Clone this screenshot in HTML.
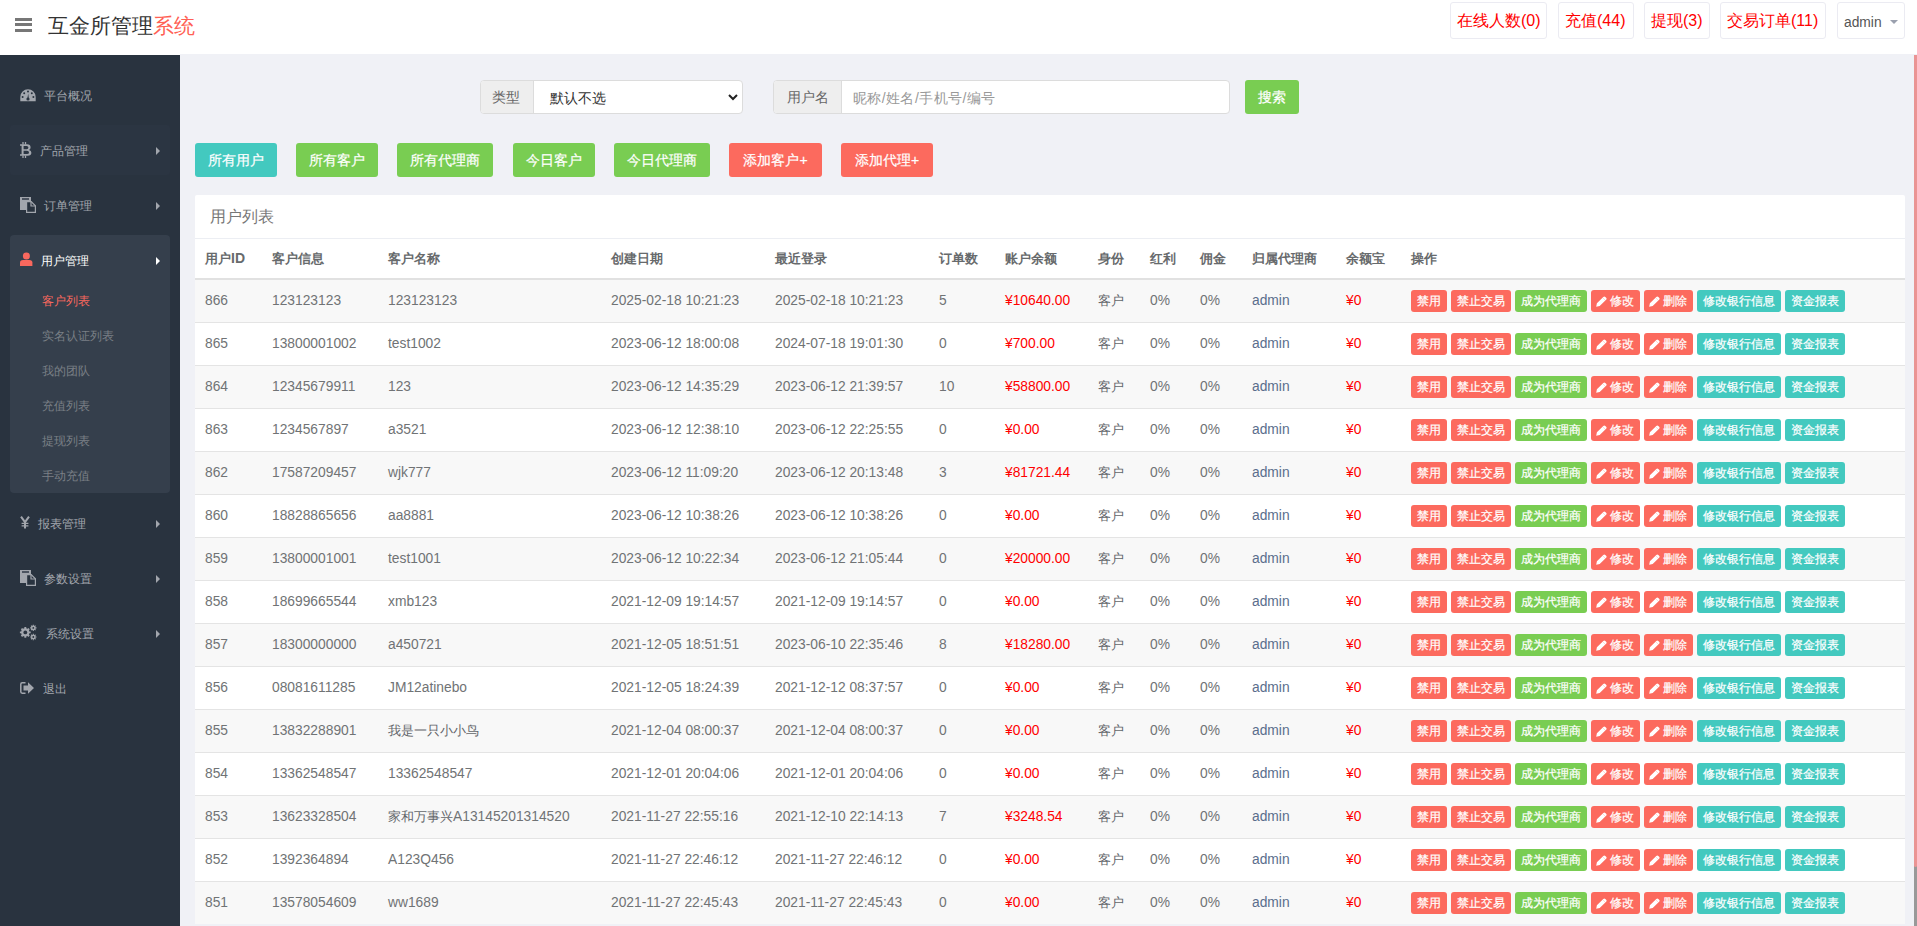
<!DOCTYPE html>
<html><head><meta charset="utf-8">
<style>
*{box-sizing:border-box;margin:0;padding:0}
html,body{width:1917px;height:926px;overflow:hidden;background:#f0f1f6;font-family:"Liberation Sans",sans-serif;color:#676a6c}
#hdr{position:absolute;left:0;top:0;width:1917px;height:55px;background:#fff}
.hb{position:absolute;left:15px;width:17px;height:3px;background:#777}
#title{position:absolute;left:48px;top:12px;font-size:21px;color:#333;line-height:28px;white-space:nowrap}
#title span{color:#ff5f55}
.tb{position:absolute;top:2px;height:37px;border:1px solid #ebebf2;border-radius:3px;color:#f00;font-size:16px;line-height:35px;padding:0 6px;white-space:nowrap;background:#fff}
#side{position:absolute;left:0;top:55px;width:180px;height:871px;background:#29333f}
.mi{position:absolute;margin-top:1px;left:0;width:180px;height:20px;line-height:20px;font-size:12px;color:#a2a6ad;white-space:nowrap}
.mi .ic{position:absolute;left:20px;top:3px}
.mi .tx{position:absolute;left:44px;top:0}
.mi .ar{position:absolute;left:156px;top:6px;width:0;height:0;border-left:4px solid #a2a6ad;border-top:4px solid transparent;border-bottom:4px solid transparent}
#active{position:absolute;left:10px;top:180px;width:160px;height:258px;background:#353f4c;border-radius:4px}
.sub{position:absolute;margin-top:1px;left:42px;font-size:12px;color:#7a7f86;line-height:20px;white-space:nowrap}
#content{position:absolute;left:180px;top:54px;width:1737px;height:872px;background:#f0f1f6}
.ig{position:absolute;top:80px;height:34px;border:1px solid #dcdcdc;border-radius:4px;background:#fff;font-size:14px}
.ig .ad{position:absolute;left:0;top:0;height:32px;background:#eeeeee;border-right:1px solid #dcdcdc;border-radius:3px 0 0 3px;color:#666;line-height:32px;text-align:center}
.btn{position:absolute;height:34px;border-radius:3px;color:#fff;font-size:14px;line-height:34px;text-align:center;white-space:nowrap}
.teal{background:#43c9bf}.green{background:#79cd52}.redb{background:#fc6a5e}
#panel{position:absolute;left:195px;top:195px;width:1710px;height:729px;background:#fff;overflow:hidden;border-radius:2px 2px 0 0}
#ptitle{position:absolute;left:15px;top:12px;font-size:16px;color:#777;line-height:20px}
#ptl{position:absolute;left:0;top:43px;width:1710px;height:1px;background:#eceef3}
table{position:absolute;left:0;top:44px;border-collapse:collapse;table-layout:fixed;width:1710px;font-size:13.8px}
th{height:40px;text-align:left;font-weight:bold;padding:0 0 0 10px;border-bottom:2px solid #e1e1e1;color:#676a6c;white-space:nowrap;font-size:14px}
td{height:43px;font-size:13.8px;padding:0 0 0 10px;border-bottom:1px solid #e4e4e4;white-space:nowrap;color:#707375}
tbody tr:nth-child(odd) td{background:#f8f8f8}
td i,th i{font-style:normal;font-size:13px}
td i{color:#63666a}
td.red{color:#f00}
td.ad{color:#5a6e8c}
td.op{padding-left:10px;padding-bottom:0;padding-top:0}
.b{display:inline-block;height:22px;line-height:22px;font-size:12px;color:#fff;padding:0 6px;border-radius:3px;margin-right:4px;vertical-align:middle}
.b,.btn{-webkit-text-stroke:0.2px #fff}
.b.r{background:#fc6a5e}.b.g{background:#79cd52}.b.t{background:#43c9bf}
.pc{vertical-align:-2px;margin-left:-1px;margin-right:3px}
#sb{position:absolute;left:1914px;top:55px;width:3px;height:812px;background:#ea9494;border-radius:0 0 2px 2px;z-index:2}
#sb2{position:absolute;left:1914px;top:864px;width:3px;height:62px;background:#999}
</style></head><body>
<div id="hdr">
  <div class="hb" style="top:18px"></div><div class="hb" style="top:23px"></div><div class="hb" style="top:29px"></div>
  <div id="title">互金所管理<span>系统</span></div>
  <div class="tb" style="left:1450px;width:97px">在线人数(0)</div>
  <div class="tb" style="left:1558px;width:76px">充值(44)</div>
  <div class="tb" style="left:1644px;width:66px">提现(3)</div>
  <div class="tb" style="left:1720px;width:106px">交易订单(11)</div>
  <div class="tb" style="left:1837px;width:68px;color:#555;font-size:13.8px;line-height:39px">admin <svg width="8" height="5" style="position:absolute;left:52px;top:17px"><path d="M0 0H8L4 4Z" fill="#9aa0ae"/></svg></div>
</div>
<div id="side">
  <div id="active"></div><div style="position:absolute;left:10px;top:70px;width:160px;height:50px;background:#2b3542;border-radius:3px"></div>
  <div class="mi" style="top:30px"><svg class="ic" width="16" height="13" viewBox="0 0 16 13" style="left:20px;top:3px"><path d="M8 0.3A7.7 7.7 0 0 0 0.3 8V12.2H15.7V8A7.7 7.7 0 0 0 8 0.3Z" fill="#a2a6ad"/><circle cx="8" cy="2.6" r="1" fill="#29333f"/><circle cx="4.2" cy="4.2" r="1" fill="#29333f"/><circle cx="11.8" cy="4.2" r="1" fill="#29333f"/><circle cx="2.6" cy="8" r="1" fill="#29333f"/><circle cx="13.4" cy="8" r="1" fill="#29333f"/><circle cx="8" cy="10" r="1.6" fill="#29333f"/><path d="M7.3 10L8.2 4.5L8.9 10Z" fill="#29333f"/></svg><span class="tx">平台概况</span></div>
  <div class="mi" style="top:85px"><svg class="ic" width="12" height="16" viewBox="0 0 12 16" style="left:20px;top:1px"><path d="M3 0V2.5M5.5 0V2.5M3 13.5V16M5.5 13.5V16" stroke="#a2a6ad" stroke-width="1.3"/><path d="M0 2.3H7Q10.6 2.3 10.6 5.5Q10.6 7.3 9 7.9Q11.4 8.6 11.4 10.8Q11.4 13.7 7.6 13.7H0V12.3H1.6V3.7H0Z M3.6 3.9V7.2H6.7Q8.4 7.2 8.4 5.5Q8.4 3.9 6.7 3.9Z M3.6 8.8V12.1H7Q9 12.1 9 10.5Q9 8.8 7 8.8Z" fill="#a2a6ad" fill-rule="evenodd"/></svg><span class="tx" style="left:40px">产品管理</span><span class="ar"></span></div>
  <div class="mi" style="top:140px"><svg class="ic" width="16" height="16" viewBox="0 0 16 16" style="left:20px;top:1px"><path d="M0 0H11V4H6V13H0Z" fill="#a2a6ad"/><rect x="2" y="1.3" width="7" height="1.4" fill="#29333f"/><path d="M6.6 4.6H11.2L15.4 8.8V15.4H6.6Z" fill="none" stroke="#a2a6ad" stroke-width="1.2"/><path d="M11 4.6V9H15.4" fill="none" stroke="#a2a6ad" stroke-width="1.2"/></svg><span class="tx">订单管理</span><span class="ar"></span></div>
  <div class="mi" style="top:195px;color:#fff"><svg class="ic" width="14" height="15" viewBox="0 0 14 15" style="left:20px;top:1px"><circle cx="6.4" cy="4.1" r="3.5" fill="#f9685e"/><path d="M0 14.1V10.6Q0 7.9 3 7.9H9.4Q12.4 7.9 12.4 10.6V14.1Z" fill="#f9685e"/></svg><span class="tx" style="left:41px">用户管理</span><span class="ar" style="border-left-color:#fff"></span></div>
  <div class="sub" style="top:235px;color:#f9685e">客户列表</div>
  <div class="sub" style="top:270px">实名认证列表</div>
  <div class="sub" style="top:305px">我的团队</div>
  <div class="sub" style="top:340px">充值列表</div>
  <div class="sub" style="top:375px">提现列表</div>
  <div class="sub" style="top:410px">手动充值</div>
  <div class="mi" style="top:458px"><svg class="ic" width="11" height="13" viewBox="0 0 11 13" style="left:20px;top:2px"><path d="M1 0.6L5 6.2M9 0.6L5 6.2M5 5.8V12.6" stroke="#a2a6ad" stroke-width="2" fill="none"/><path d="M1.6 7.4H8.4M1.6 9.8H8.4" stroke="#a2a6ad" stroke-width="1.3" fill="none"/></svg><span class="tx" style="left:38px">报表管理</span><span class="ar"></span></div>
  <div class="mi" style="top:513px"><svg class="ic" width="16" height="16" viewBox="0 0 16 16" style="left:20px;top:1px"><path d="M0 0H11V4H6V13H0Z" fill="#a2a6ad"/><rect x="2" y="1.3" width="7" height="1.4" fill="#29333f"/><path d="M6.6 4.6H11.2L15.4 8.8V15.4H6.6Z" fill="none" stroke="#a2a6ad" stroke-width="1.2"/><path d="M11 4.6V9H15.4" fill="none" stroke="#a2a6ad" stroke-width="1.2"/></svg><span class="tx">参数设置</span><span class="ar"></span></div>
  <div class="mi" style="top:568px"><svg class="ic" width="18" height="18" viewBox="0 0 18 18" style="left:19px;top:0px"><circle cx="6.3" cy="8.4" r="4.1" fill="#a2a6ad"/><path d="M11.70 8.40L0.90 8.40M10.12 12.22L2.48 4.58M6.30 13.80L6.30 3.00M2.48 12.22L10.12 4.58" stroke="#a2a6ad" stroke-width="1.9"/><circle cx="6.3" cy="8.4" r="1.9" fill="#29333f"/><circle cx="14.3" cy="3.9" r="2.3" fill="#a2a6ad"/><path d="M17.50 3.90L11.10 3.90M16.56 6.16L12.04 1.64M14.30 7.10L14.30 0.70M12.04 6.16L16.56 1.64" stroke="#a2a6ad" stroke-width="1.1"/><circle cx="14.3" cy="3.9" r="0.9" fill="#29333f"/><circle cx="14.3" cy="13.0" r="2.3" fill="#a2a6ad"/><path d="M17.50 13.00L11.10 13.00M16.56 15.26L12.04 10.74M14.30 16.20L14.30 9.80M12.04 15.26L16.56 10.74" stroke="#a2a6ad" stroke-width="1.1"/><circle cx="14.3" cy="13.0" r="0.9" fill="#29333f"/></svg><span class="tx" style="left:46px">系统设置</span><span class="ar"></span></div>
  <div class="mi" style="top:623px"><svg class="ic" width="15" height="12" viewBox="0 0 15 12" style="left:20px;top:3px"><path d="M5.5 0.8H2.2Q0.8 0.8 0.8 2.2V9.8Q0.8 11.2 2.2 11.2H5.5" stroke="#a2a6ad" stroke-width="1.5" fill="none"/><path d="M3.5 3.6H8V0.3L14 6L8 11.7V8.4H3.5Z" fill="#a2a6ad"/></svg><span class="tx" style="left:43px">退出</span></div>
</div>
<div id="content"></div>
<div class="ig" style="left:480px;width:263px"><div class="ad" style="width:53px;padding-right:2px">类型</div><span style="position:absolute;left:69px;top:9px;color:#333">默认不选</span><svg width="10" height="7" viewBox="0 0 10 7" style="position:absolute;left:247px;top:13px"><path d="M1 1L5 5L9 1" stroke="#222" stroke-width="2" fill="none"/></svg></div>
<div class="ig" style="left:773px;width:457px"><div class="ad" style="width:68px">用户名</div><span style="position:absolute;left:79px;top:9px;color:#999;letter-spacing:0.4px">昵称/姓名/手机号/编号</span></div>
<div class="btn green" style="left:1245px;top:80px;width:54px">搜索</div>
<div class="btn teal" style="left:195px;top:143px;width:82px">所有用户</div>
<div class="btn green" style="left:296px;top:143px;width:82px">所有客户</div>
<div class="btn green" style="left:397px;top:143px;width:96px">所有代理商</div>
<div class="btn green" style="left:513px;top:143px;width:82px">今日客户</div>
<div class="btn green" style="left:614px;top:143px;width:96px">今日代理商</div>
<div class="btn redb" style="left:729px;top:143px;width:93px">添加客户+</div>
<div class="btn redb" style="left:841px;top:143px;width:92px">添加代理+</div>
<div id="panel">
  <div id="ptitle">用户列表</div>
  <div id="ptl"></div>
  <table>
    <colgroup><col style="width:67px"><col style="width:116px"><col style="width:223px"><col style="width:164px"><col style="width:164px"><col style="width:66px"><col style="width:93px"><col style="width:52px"><col style="width:50px"><col style="width:52px"><col style="width:94px"><col style="width:65px"><col></colgroup>
    <thead><tr><th><i>用户</i>ID</th><th><i>客户信息</i></th><th><i>客户名称</i></th><th><i>创建日期</i></th><th><i>最近登录</i></th><th><i>订单数</i></th><th><i>账户余额</i></th><th><i>身份</i></th><th><i>红利</i></th><th><i>佣金</i></th><th><i>归属代理商</i></th><th><i>余额宝</i></th><th><i>操作</i></th></tr></thead>
    <tbody>
<tr><td>866</td><td>123123123</td><td>123123123</td><td>2025-02-18 10:21:23</td><td>2025-02-18 10:21:23</td><td>5</td><td class="red">¥10640.00</td><td><i>客户</i></td><td>0%</td><td>0%</td><td class="ad">admin</td><td class="red">¥0</td><td class="op"><span class="b r">禁用</span><span class="b r">禁止交易</span><span class="b g">成为代理商</span><span class="b r"><svg class="pc" width="11" height="11" viewBox="0 0 11 11"><path d="M0.2 10.8L0.9 7.3L7.3 0.9Q8.3 -0.1 9.3 0.9L10.1 1.7Q11.1 2.7 10.1 3.7L3.7 10.1Z" fill="#fff"/><path d="M6.9 1.9L9.1 4.1" stroke="#f96b61" stroke-width="0.5" opacity="0.5"/></svg>修改</span><span class="b r"><svg class="pc" width="11" height="11" viewBox="0 0 11 11"><path d="M0.2 10.8L0.9 7.3L7.3 0.9Q8.3 -0.1 9.3 0.9L10.1 1.7Q11.1 2.7 10.1 3.7L3.7 10.1Z" fill="#fff"/><path d="M6.9 1.9L9.1 4.1" stroke="#f96b61" stroke-width="0.5" opacity="0.5"/></svg>删除</span><span class="b t">修改银行信息</span><span class="b t">资金报表</span></td></tr>
<tr><td>865</td><td>13800001002</td><td>test1002</td><td>2023-06-12 18:00:08</td><td>2024-07-18 19:01:30</td><td>0</td><td class="red">¥700.00</td><td><i>客户</i></td><td>0%</td><td>0%</td><td class="ad">admin</td><td class="red">¥0</td><td class="op"><span class="b r">禁用</span><span class="b r">禁止交易</span><span class="b g">成为代理商</span><span class="b r"><svg class="pc" width="11" height="11" viewBox="0 0 11 11"><path d="M0.2 10.8L0.9 7.3L7.3 0.9Q8.3 -0.1 9.3 0.9L10.1 1.7Q11.1 2.7 10.1 3.7L3.7 10.1Z" fill="#fff"/><path d="M6.9 1.9L9.1 4.1" stroke="#f96b61" stroke-width="0.5" opacity="0.5"/></svg>修改</span><span class="b r"><svg class="pc" width="11" height="11" viewBox="0 0 11 11"><path d="M0.2 10.8L0.9 7.3L7.3 0.9Q8.3 -0.1 9.3 0.9L10.1 1.7Q11.1 2.7 10.1 3.7L3.7 10.1Z" fill="#fff"/><path d="M6.9 1.9L9.1 4.1" stroke="#f96b61" stroke-width="0.5" opacity="0.5"/></svg>删除</span><span class="b t">修改银行信息</span><span class="b t">资金报表</span></td></tr>
<tr><td>864</td><td>12345679911</td><td>123</td><td>2023-06-12 14:35:29</td><td>2023-06-12 21:39:57</td><td>10</td><td class="red">¥58800.00</td><td><i>客户</i></td><td>0%</td><td>0%</td><td class="ad">admin</td><td class="red">¥0</td><td class="op"><span class="b r">禁用</span><span class="b r">禁止交易</span><span class="b g">成为代理商</span><span class="b r"><svg class="pc" width="11" height="11" viewBox="0 0 11 11"><path d="M0.2 10.8L0.9 7.3L7.3 0.9Q8.3 -0.1 9.3 0.9L10.1 1.7Q11.1 2.7 10.1 3.7L3.7 10.1Z" fill="#fff"/><path d="M6.9 1.9L9.1 4.1" stroke="#f96b61" stroke-width="0.5" opacity="0.5"/></svg>修改</span><span class="b r"><svg class="pc" width="11" height="11" viewBox="0 0 11 11"><path d="M0.2 10.8L0.9 7.3L7.3 0.9Q8.3 -0.1 9.3 0.9L10.1 1.7Q11.1 2.7 10.1 3.7L3.7 10.1Z" fill="#fff"/><path d="M6.9 1.9L9.1 4.1" stroke="#f96b61" stroke-width="0.5" opacity="0.5"/></svg>删除</span><span class="b t">修改银行信息</span><span class="b t">资金报表</span></td></tr>
<tr><td>863</td><td>1234567897</td><td>a3521</td><td>2023-06-12 12:38:10</td><td>2023-06-12 22:25:55</td><td>0</td><td class="red">¥0.00</td><td><i>客户</i></td><td>0%</td><td>0%</td><td class="ad">admin</td><td class="red">¥0</td><td class="op"><span class="b r">禁用</span><span class="b r">禁止交易</span><span class="b g">成为代理商</span><span class="b r"><svg class="pc" width="11" height="11" viewBox="0 0 11 11"><path d="M0.2 10.8L0.9 7.3L7.3 0.9Q8.3 -0.1 9.3 0.9L10.1 1.7Q11.1 2.7 10.1 3.7L3.7 10.1Z" fill="#fff"/><path d="M6.9 1.9L9.1 4.1" stroke="#f96b61" stroke-width="0.5" opacity="0.5"/></svg>修改</span><span class="b r"><svg class="pc" width="11" height="11" viewBox="0 0 11 11"><path d="M0.2 10.8L0.9 7.3L7.3 0.9Q8.3 -0.1 9.3 0.9L10.1 1.7Q11.1 2.7 10.1 3.7L3.7 10.1Z" fill="#fff"/><path d="M6.9 1.9L9.1 4.1" stroke="#f96b61" stroke-width="0.5" opacity="0.5"/></svg>删除</span><span class="b t">修改银行信息</span><span class="b t">资金报表</span></td></tr>
<tr><td>862</td><td>17587209457</td><td>wjk777</td><td>2023-06-12 11:09:20</td><td>2023-06-12 20:13:48</td><td>3</td><td class="red">¥81721.44</td><td><i>客户</i></td><td>0%</td><td>0%</td><td class="ad">admin</td><td class="red">¥0</td><td class="op"><span class="b r">禁用</span><span class="b r">禁止交易</span><span class="b g">成为代理商</span><span class="b r"><svg class="pc" width="11" height="11" viewBox="0 0 11 11"><path d="M0.2 10.8L0.9 7.3L7.3 0.9Q8.3 -0.1 9.3 0.9L10.1 1.7Q11.1 2.7 10.1 3.7L3.7 10.1Z" fill="#fff"/><path d="M6.9 1.9L9.1 4.1" stroke="#f96b61" stroke-width="0.5" opacity="0.5"/></svg>修改</span><span class="b r"><svg class="pc" width="11" height="11" viewBox="0 0 11 11"><path d="M0.2 10.8L0.9 7.3L7.3 0.9Q8.3 -0.1 9.3 0.9L10.1 1.7Q11.1 2.7 10.1 3.7L3.7 10.1Z" fill="#fff"/><path d="M6.9 1.9L9.1 4.1" stroke="#f96b61" stroke-width="0.5" opacity="0.5"/></svg>删除</span><span class="b t">修改银行信息</span><span class="b t">资金报表</span></td></tr>
<tr><td>860</td><td>18828865656</td><td>aa8881</td><td>2023-06-12 10:38:26</td><td>2023-06-12 10:38:26</td><td>0</td><td class="red">¥0.00</td><td><i>客户</i></td><td>0%</td><td>0%</td><td class="ad">admin</td><td class="red">¥0</td><td class="op"><span class="b r">禁用</span><span class="b r">禁止交易</span><span class="b g">成为代理商</span><span class="b r"><svg class="pc" width="11" height="11" viewBox="0 0 11 11"><path d="M0.2 10.8L0.9 7.3L7.3 0.9Q8.3 -0.1 9.3 0.9L10.1 1.7Q11.1 2.7 10.1 3.7L3.7 10.1Z" fill="#fff"/><path d="M6.9 1.9L9.1 4.1" stroke="#f96b61" stroke-width="0.5" opacity="0.5"/></svg>修改</span><span class="b r"><svg class="pc" width="11" height="11" viewBox="0 0 11 11"><path d="M0.2 10.8L0.9 7.3L7.3 0.9Q8.3 -0.1 9.3 0.9L10.1 1.7Q11.1 2.7 10.1 3.7L3.7 10.1Z" fill="#fff"/><path d="M6.9 1.9L9.1 4.1" stroke="#f96b61" stroke-width="0.5" opacity="0.5"/></svg>删除</span><span class="b t">修改银行信息</span><span class="b t">资金报表</span></td></tr>
<tr><td>859</td><td>13800001001</td><td>test1001</td><td>2023-06-12 10:22:34</td><td>2023-06-12 21:05:44</td><td>0</td><td class="red">¥20000.00</td><td><i>客户</i></td><td>0%</td><td>0%</td><td class="ad">admin</td><td class="red">¥0</td><td class="op"><span class="b r">禁用</span><span class="b r">禁止交易</span><span class="b g">成为代理商</span><span class="b r"><svg class="pc" width="11" height="11" viewBox="0 0 11 11"><path d="M0.2 10.8L0.9 7.3L7.3 0.9Q8.3 -0.1 9.3 0.9L10.1 1.7Q11.1 2.7 10.1 3.7L3.7 10.1Z" fill="#fff"/><path d="M6.9 1.9L9.1 4.1" stroke="#f96b61" stroke-width="0.5" opacity="0.5"/></svg>修改</span><span class="b r"><svg class="pc" width="11" height="11" viewBox="0 0 11 11"><path d="M0.2 10.8L0.9 7.3L7.3 0.9Q8.3 -0.1 9.3 0.9L10.1 1.7Q11.1 2.7 10.1 3.7L3.7 10.1Z" fill="#fff"/><path d="M6.9 1.9L9.1 4.1" stroke="#f96b61" stroke-width="0.5" opacity="0.5"/></svg>删除</span><span class="b t">修改银行信息</span><span class="b t">资金报表</span></td></tr>
<tr><td>858</td><td>18699665544</td><td>xmb123</td><td>2021-12-09 19:14:57</td><td>2021-12-09 19:14:57</td><td>0</td><td class="red">¥0.00</td><td><i>客户</i></td><td>0%</td><td>0%</td><td class="ad">admin</td><td class="red">¥0</td><td class="op"><span class="b r">禁用</span><span class="b r">禁止交易</span><span class="b g">成为代理商</span><span class="b r"><svg class="pc" width="11" height="11" viewBox="0 0 11 11"><path d="M0.2 10.8L0.9 7.3L7.3 0.9Q8.3 -0.1 9.3 0.9L10.1 1.7Q11.1 2.7 10.1 3.7L3.7 10.1Z" fill="#fff"/><path d="M6.9 1.9L9.1 4.1" stroke="#f96b61" stroke-width="0.5" opacity="0.5"/></svg>修改</span><span class="b r"><svg class="pc" width="11" height="11" viewBox="0 0 11 11"><path d="M0.2 10.8L0.9 7.3L7.3 0.9Q8.3 -0.1 9.3 0.9L10.1 1.7Q11.1 2.7 10.1 3.7L3.7 10.1Z" fill="#fff"/><path d="M6.9 1.9L9.1 4.1" stroke="#f96b61" stroke-width="0.5" opacity="0.5"/></svg>删除</span><span class="b t">修改银行信息</span><span class="b t">资金报表</span></td></tr>
<tr><td>857</td><td>18300000000</td><td>a450721</td><td>2021-12-05 18:51:51</td><td>2023-06-10 22:35:46</td><td>8</td><td class="red">¥18280.00</td><td><i>客户</i></td><td>0%</td><td>0%</td><td class="ad">admin</td><td class="red">¥0</td><td class="op"><span class="b r">禁用</span><span class="b r">禁止交易</span><span class="b g">成为代理商</span><span class="b r"><svg class="pc" width="11" height="11" viewBox="0 0 11 11"><path d="M0.2 10.8L0.9 7.3L7.3 0.9Q8.3 -0.1 9.3 0.9L10.1 1.7Q11.1 2.7 10.1 3.7L3.7 10.1Z" fill="#fff"/><path d="M6.9 1.9L9.1 4.1" stroke="#f96b61" stroke-width="0.5" opacity="0.5"/></svg>修改</span><span class="b r"><svg class="pc" width="11" height="11" viewBox="0 0 11 11"><path d="M0.2 10.8L0.9 7.3L7.3 0.9Q8.3 -0.1 9.3 0.9L10.1 1.7Q11.1 2.7 10.1 3.7L3.7 10.1Z" fill="#fff"/><path d="M6.9 1.9L9.1 4.1" stroke="#f96b61" stroke-width="0.5" opacity="0.5"/></svg>删除</span><span class="b t">修改银行信息</span><span class="b t">资金报表</span></td></tr>
<tr><td>856</td><td>08081611285</td><td>JM12atinebo</td><td>2021-12-05 18:24:39</td><td>2021-12-12 08:37:57</td><td>0</td><td class="red">¥0.00</td><td><i>客户</i></td><td>0%</td><td>0%</td><td class="ad">admin</td><td class="red">¥0</td><td class="op"><span class="b r">禁用</span><span class="b r">禁止交易</span><span class="b g">成为代理商</span><span class="b r"><svg class="pc" width="11" height="11" viewBox="0 0 11 11"><path d="M0.2 10.8L0.9 7.3L7.3 0.9Q8.3 -0.1 9.3 0.9L10.1 1.7Q11.1 2.7 10.1 3.7L3.7 10.1Z" fill="#fff"/><path d="M6.9 1.9L9.1 4.1" stroke="#f96b61" stroke-width="0.5" opacity="0.5"/></svg>修改</span><span class="b r"><svg class="pc" width="11" height="11" viewBox="0 0 11 11"><path d="M0.2 10.8L0.9 7.3L7.3 0.9Q8.3 -0.1 9.3 0.9L10.1 1.7Q11.1 2.7 10.1 3.7L3.7 10.1Z" fill="#fff"/><path d="M6.9 1.9L9.1 4.1" stroke="#f96b61" stroke-width="0.5" opacity="0.5"/></svg>删除</span><span class="b t">修改银行信息</span><span class="b t">资金报表</span></td></tr>
<tr><td>855</td><td>13832288901</td><td><i>我是一只小小鸟</i></td><td>2021-12-04 08:00:37</td><td>2021-12-04 08:00:37</td><td>0</td><td class="red">¥0.00</td><td><i>客户</i></td><td>0%</td><td>0%</td><td class="ad">admin</td><td class="red">¥0</td><td class="op"><span class="b r">禁用</span><span class="b r">禁止交易</span><span class="b g">成为代理商</span><span class="b r"><svg class="pc" width="11" height="11" viewBox="0 0 11 11"><path d="M0.2 10.8L0.9 7.3L7.3 0.9Q8.3 -0.1 9.3 0.9L10.1 1.7Q11.1 2.7 10.1 3.7L3.7 10.1Z" fill="#fff"/><path d="M6.9 1.9L9.1 4.1" stroke="#f96b61" stroke-width="0.5" opacity="0.5"/></svg>修改</span><span class="b r"><svg class="pc" width="11" height="11" viewBox="0 0 11 11"><path d="M0.2 10.8L0.9 7.3L7.3 0.9Q8.3 -0.1 9.3 0.9L10.1 1.7Q11.1 2.7 10.1 3.7L3.7 10.1Z" fill="#fff"/><path d="M6.9 1.9L9.1 4.1" stroke="#f96b61" stroke-width="0.5" opacity="0.5"/></svg>删除</span><span class="b t">修改银行信息</span><span class="b t">资金报表</span></td></tr>
<tr><td>854</td><td>13362548547</td><td>13362548547</td><td>2021-12-01 20:04:06</td><td>2021-12-01 20:04:06</td><td>0</td><td class="red">¥0.00</td><td><i>客户</i></td><td>0%</td><td>0%</td><td class="ad">admin</td><td class="red">¥0</td><td class="op"><span class="b r">禁用</span><span class="b r">禁止交易</span><span class="b g">成为代理商</span><span class="b r"><svg class="pc" width="11" height="11" viewBox="0 0 11 11"><path d="M0.2 10.8L0.9 7.3L7.3 0.9Q8.3 -0.1 9.3 0.9L10.1 1.7Q11.1 2.7 10.1 3.7L3.7 10.1Z" fill="#fff"/><path d="M6.9 1.9L9.1 4.1" stroke="#f96b61" stroke-width="0.5" opacity="0.5"/></svg>修改</span><span class="b r"><svg class="pc" width="11" height="11" viewBox="0 0 11 11"><path d="M0.2 10.8L0.9 7.3L7.3 0.9Q8.3 -0.1 9.3 0.9L10.1 1.7Q11.1 2.7 10.1 3.7L3.7 10.1Z" fill="#fff"/><path d="M6.9 1.9L9.1 4.1" stroke="#f96b61" stroke-width="0.5" opacity="0.5"/></svg>删除</span><span class="b t">修改银行信息</span><span class="b t">资金报表</span></td></tr>
<tr><td>853</td><td>13623328504</td><td><i>家和万事兴</i>A13145201314520</td><td>2021-11-27 22:55:16</td><td>2021-12-10 22:14:13</td><td>7</td><td class="red">¥3248.54</td><td><i>客户</i></td><td>0%</td><td>0%</td><td class="ad">admin</td><td class="red">¥0</td><td class="op"><span class="b r">禁用</span><span class="b r">禁止交易</span><span class="b g">成为代理商</span><span class="b r"><svg class="pc" width="11" height="11" viewBox="0 0 11 11"><path d="M0.2 10.8L0.9 7.3L7.3 0.9Q8.3 -0.1 9.3 0.9L10.1 1.7Q11.1 2.7 10.1 3.7L3.7 10.1Z" fill="#fff"/><path d="M6.9 1.9L9.1 4.1" stroke="#f96b61" stroke-width="0.5" opacity="0.5"/></svg>修改</span><span class="b r"><svg class="pc" width="11" height="11" viewBox="0 0 11 11"><path d="M0.2 10.8L0.9 7.3L7.3 0.9Q8.3 -0.1 9.3 0.9L10.1 1.7Q11.1 2.7 10.1 3.7L3.7 10.1Z" fill="#fff"/><path d="M6.9 1.9L9.1 4.1" stroke="#f96b61" stroke-width="0.5" opacity="0.5"/></svg>删除</span><span class="b t">修改银行信息</span><span class="b t">资金报表</span></td></tr>
<tr><td>852</td><td>1392364894</td><td>A123Q456</td><td>2021-11-27 22:46:12</td><td>2021-11-27 22:46:12</td><td>0</td><td class="red">¥0.00</td><td><i>客户</i></td><td>0%</td><td>0%</td><td class="ad">admin</td><td class="red">¥0</td><td class="op"><span class="b r">禁用</span><span class="b r">禁止交易</span><span class="b g">成为代理商</span><span class="b r"><svg class="pc" width="11" height="11" viewBox="0 0 11 11"><path d="M0.2 10.8L0.9 7.3L7.3 0.9Q8.3 -0.1 9.3 0.9L10.1 1.7Q11.1 2.7 10.1 3.7L3.7 10.1Z" fill="#fff"/><path d="M6.9 1.9L9.1 4.1" stroke="#f96b61" stroke-width="0.5" opacity="0.5"/></svg>修改</span><span class="b r"><svg class="pc" width="11" height="11" viewBox="0 0 11 11"><path d="M0.2 10.8L0.9 7.3L7.3 0.9Q8.3 -0.1 9.3 0.9L10.1 1.7Q11.1 2.7 10.1 3.7L3.7 10.1Z" fill="#fff"/><path d="M6.9 1.9L9.1 4.1" stroke="#f96b61" stroke-width="0.5" opacity="0.5"/></svg>删除</span><span class="b t">修改银行信息</span><span class="b t">资金报表</span></td></tr>
<tr><td>851</td><td>13578054609</td><td>ww1689</td><td>2021-11-27 22:45:43</td><td>2021-11-27 22:45:43</td><td>0</td><td class="red">¥0.00</td><td><i>客户</i></td><td>0%</td><td>0%</td><td class="ad">admin</td><td class="red">¥0</td><td class="op"><span class="b r">禁用</span><span class="b r">禁止交易</span><span class="b g">成为代理商</span><span class="b r"><svg class="pc" width="11" height="11" viewBox="0 0 11 11"><path d="M0.2 10.8L0.9 7.3L7.3 0.9Q8.3 -0.1 9.3 0.9L10.1 1.7Q11.1 2.7 10.1 3.7L3.7 10.1Z" fill="#fff"/><path d="M6.9 1.9L9.1 4.1" stroke="#f96b61" stroke-width="0.5" opacity="0.5"/></svg>修改</span><span class="b r"><svg class="pc" width="11" height="11" viewBox="0 0 11 11"><path d="M0.2 10.8L0.9 7.3L7.3 0.9Q8.3 -0.1 9.3 0.9L10.1 1.7Q11.1 2.7 10.1 3.7L3.7 10.1Z" fill="#fff"/><path d="M6.9 1.9L9.1 4.1" stroke="#f96b61" stroke-width="0.5" opacity="0.5"/></svg>删除</span><span class="b t">修改银行信息</span><span class="b t">资金报表</span></td></tr>
    </tbody>
  </table>
</div>
<div id="sb"></div><div id="sb2"></div>
</body></html>
